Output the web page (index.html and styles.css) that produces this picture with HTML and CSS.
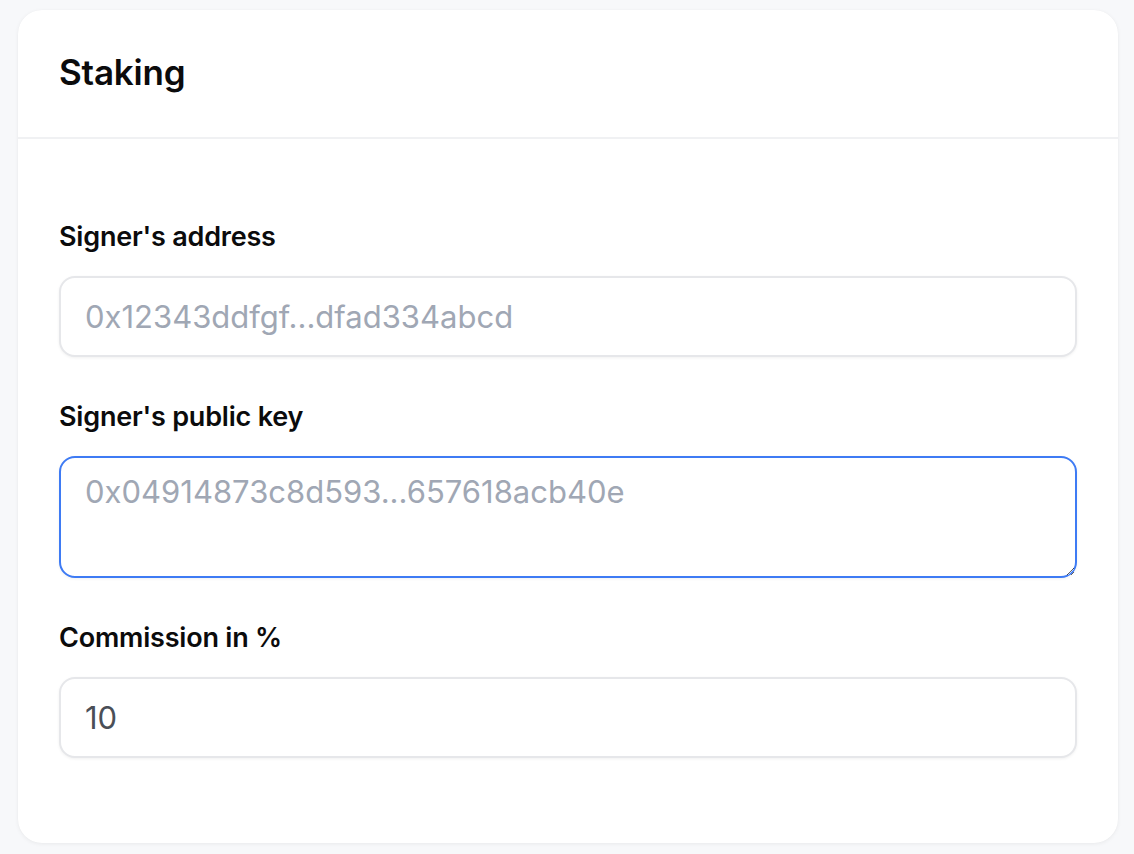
FILE: index.html
```html
<!DOCTYPE html>
<html lang="en">
<head>
<meta charset="utf-8">
<title>Staking</title>
<link rel="stylesheet" href="styles.css">
</head>
<body>
<div class="page">
  <section class="card">
    <header class="card-header">
      <h1 class="title">Staking</h1>
    </header>
    <form class="card-body">
      <div class="field">
        <label class="label" for="addr">Signer's address</label>
        <input id="addr" class="control" type="text" placeholder="0x12343ddfgf...dfad334abcd">
      </div>
      <div class="field">
        <label class="label" for="pk">Signer's public key</label>
        <textarea id="pk" class="control area focused" placeholder="0x04914873c8d593...657618acb40e"></textarea>
      </div>
      <div class="field">
        <label class="label" for="comm">Commission in %</label>
        <input id="comm" class="control value" type="text" value="10">
      </div>
    </form>
  </section>
</div>
</body>
</html>
```
FILE: styles.css
```css
* { box-sizing: border-box; }
html, body {
  margin: 0;
  padding: 0;
  background: #f7f8fa;
  font-family: Inter, "Liberation Sans", sans-serif;
}
.page {
  padding: 10px 16px 11px 18px;
  height: 854px;
}
.card {
  background: #ffffff;
  border-radius: 24px;
  box-shadow: 0 1px 4px rgba(0, 0, 0, 0.06), 0 0 1px rgba(0, 0, 0, 0.04);
  height: 833px;
  width: 1100px;
  display: flex;
  flex-direction: column;
}
.card-header {
  height: 129px;
  border-bottom: 2px solid #f0f1f3;
  padding: 0 41px;
  display: flex;
  align-items: center;
}
.title {
  margin: 0;
  margin-top: -3px;
  font-size: 35px;
  font-weight: 600;
  color: #0b0b0c;
  letter-spacing: -0.2px;
}
.card-body {
  padding: 80px 41px 0 41px;
  display: flex;
  flex-direction: column;
  gap: 42px;
}
.field {
  display: flex;
  flex-direction: column;
  gap: 21px;
}
.label {
  font-size: 27px;
  line-height: 36px;
  font-weight: 600;
  color: #0b0b0c;
  letter-spacing: -0.2px;
}
.control {
  width: 1018px;
  height: 81px;
  border: 2px solid #e6e7ea;
  border-radius: 16px;
  background: #fff;
  box-shadow: 0 1px 3px rgba(0, 0, 0, 0.06);
  padding: 0 24px;
  font-family: Inter, "Liberation Sans", sans-serif;
  font-size: 31px;
  color: #4b5058;
  outline: none;
}
.control::placeholder {
  color: #a0a7b4;
}
.area {
  height: 122px;
  padding: 14px 24px;
  line-height: 40px;
  resize: vertical;
}
.focused {
  border-color: #3e7bf4;
}
.value {
  color: #4a4f57;
}
```
